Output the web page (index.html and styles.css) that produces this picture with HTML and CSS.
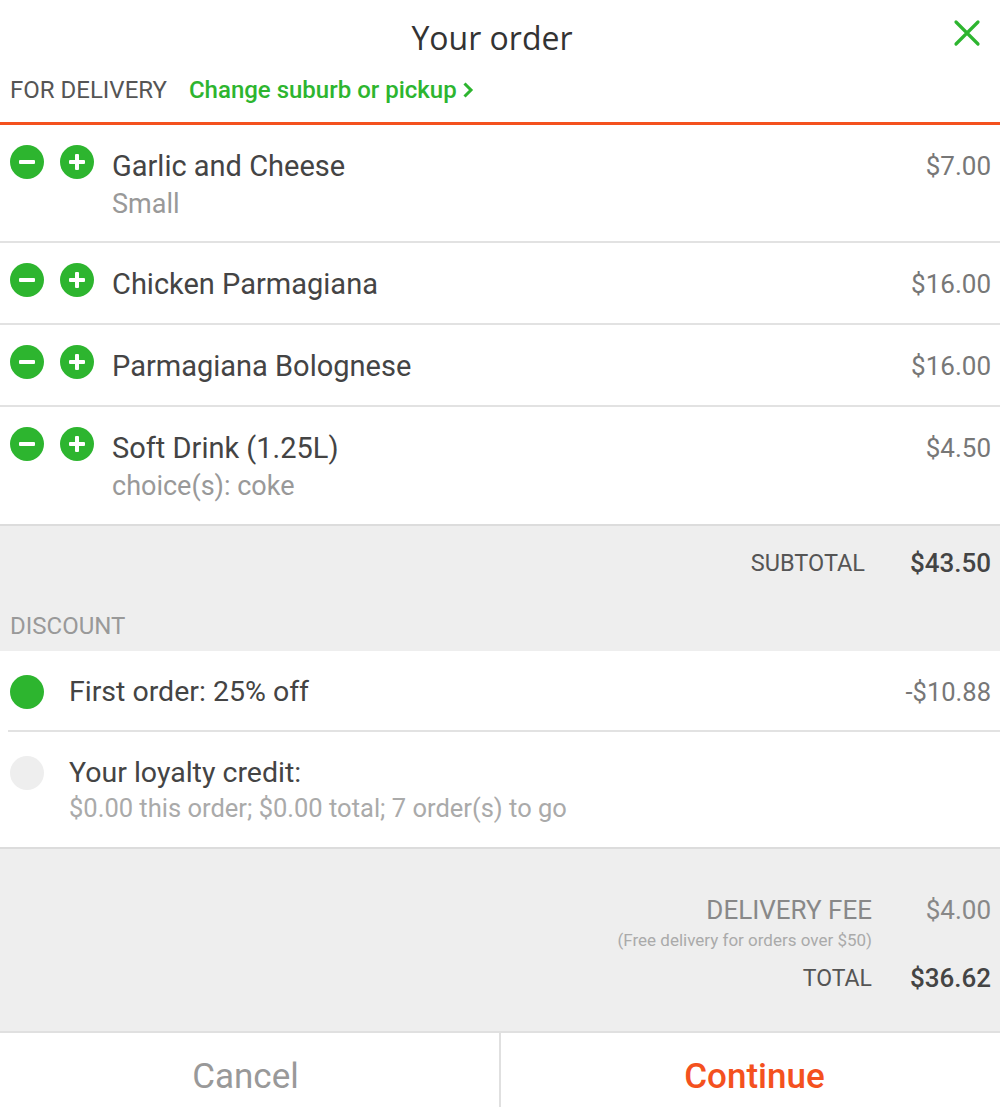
FILE: index.html
```html
<!DOCTYPE html>
<html>
<head>
<meta charset="utf-8">
<link rel="stylesheet" href="styles.css">
</head>
<body>
<div class="page">
  <header class="header">
    <div class="title-row">
      <span></span>
      <h1 class="title">Your order</h1>
      <button class="close" aria-label="Close">
        <svg width="28" height="28" viewBox="0 0 28 28"><path d="M3 3 L25 25 M25 3 L3 25" stroke="#2db52f" stroke-width="3.2" stroke-linecap="round" fill="none"/></svg>
      </button>
    </div>
    <div class="delivery-row">
      <span class="for-delivery">FOR DELIVERY</span>
      <a class="change-link">Change suburb or pickup
        <svg class="chev" width="12" height="18" viewBox="0 0 12 18"><path d="M2.5 2.5 L9 9 L2.5 15.5" stroke="#2db52f" stroke-width="3" fill="none"/></svg>
      </a>
    </div>
  </header>

  <section class="items">
    <div class="item">
      <div class="qty">
        <span class="btn-circle"><svg width="34" height="34" viewBox="0 0 34 34"><circle cx="17" cy="17" r="17" fill="#2db52f"/><rect x="9" y="15" width="16" height="4" rx="1" fill="#fff"/></svg></span>
        <span class="btn-circle"><svg width="34" height="34" viewBox="0 0 34 34"><circle cx="17" cy="17" r="17" fill="#2db52f"/><rect x="9" y="15" width="16" height="4" rx="1" fill="#fff"/><rect x="15" y="9" width="4" height="16" rx="1" fill="#fff"/></svg></span>
      </div>
      <div class="item-text">
        <div class="item-name">Garlic and Cheese</div>
        <div class="item-sub">Small</div>
      </div>
      <div class="item-price">$7.00</div>
    </div>
    <div class="item">
      <div class="qty">
        <span class="btn-circle"><svg width="34" height="34" viewBox="0 0 34 34"><circle cx="17" cy="17" r="17" fill="#2db52f"/><rect x="9" y="15" width="16" height="4" rx="1" fill="#fff"/></svg></span>
        <span class="btn-circle"><svg width="34" height="34" viewBox="0 0 34 34"><circle cx="17" cy="17" r="17" fill="#2db52f"/><rect x="9" y="15" width="16" height="4" rx="1" fill="#fff"/><rect x="15" y="9" width="4" height="16" rx="1" fill="#fff"/></svg></span>
      </div>
      <div class="item-text">
        <div class="item-name">Chicken Parmagiana</div>
      </div>
      <div class="item-price">$16.00</div>
    </div>
    <div class="item">
      <div class="qty">
        <span class="btn-circle"><svg width="34" height="34" viewBox="0 0 34 34"><circle cx="17" cy="17" r="17" fill="#2db52f"/><rect x="9" y="15" width="16" height="4" rx="1" fill="#fff"/></svg></span>
        <span class="btn-circle"><svg width="34" height="34" viewBox="0 0 34 34"><circle cx="17" cy="17" r="17" fill="#2db52f"/><rect x="9" y="15" width="16" height="4" rx="1" fill="#fff"/><rect x="15" y="9" width="4" height="16" rx="1" fill="#fff"/></svg></span>
      </div>
      <div class="item-text">
        <div class="item-name">Parmagiana Bolognese</div>
      </div>
      <div class="item-price">$16.00</div>
    </div>
    <div class="item">
      <div class="qty">
        <span class="btn-circle"><svg width="34" height="34" viewBox="0 0 34 34"><circle cx="17" cy="17" r="17" fill="#2db52f"/><rect x="9" y="15" width="16" height="4" rx="1" fill="#fff"/></svg></span>
        <span class="btn-circle"><svg width="34" height="34" viewBox="0 0 34 34"><circle cx="17" cy="17" r="17" fill="#2db52f"/><rect x="9" y="15" width="16" height="4" rx="1" fill="#fff"/><rect x="15" y="9" width="4" height="16" rx="1" fill="#fff"/></svg></span>
      </div>
      <div class="item-text">
        <div class="item-name">Soft Drink (1.25L)</div>
        <div class="item-sub">choice(s): coke</div>
      </div>
      <div class="item-price">$4.50</div>
    </div>
  </section>

  <section class="subtotal-band">
    <div class="sum-row subtotal">
      <span class="sum-label">SUBTOTAL</span>
      <span class="sum-value strong">$43.50</span>
    </div>
    <div class="discount-head">DISCOUNT</div>
  </section>

  <section class="discounts">
    <div class="disc">
      <span class="dot on"></span>
      <div class="disc-text">
        <div class="disc-name">First order: 25% off</div>
      </div>
      <div class="disc-value">-$10.88</div>
    </div>
    <div class="disc">
      <span class="dot off"></span>
      <div class="disc-text">
        <div class="disc-name">Your loyalty credit:</div>
        <div class="disc-sub">$0.00 this order; $0.00 total; 7 order(s) to go</div>
      </div>
    </div>
  </section>

  <section class="totals-band">
    <div class="sum-row">
      <span class="sum-label fee">DELIVERY FEE</span>
      <span class="sum-value muted">$4.00</span>
    </div>
    <div class="note-row">
      <span class="note">(Free delivery for orders over $50)</span>
      <span class="note-spacer"></span>
    </div>
    <div class="sum-row">
      <span class="sum-label">TOTAL</span>
      <span class="sum-value strong">$36.62</span>
    </div>
  </section>

  <footer class="actions">
    <button class="action cancel">Cancel</button>
    <button class="action continue">Continue</button>
  </footer>
</div>
</body>
</html>
```
FILE: styles.css
```css
* { box-sizing: border-box; }
html, body { margin: 0; padding: 0; background: #fff; }
body {
  font-family: Roboto, "Liberation Sans", sans-serif;
  color: #444;
  overflow: hidden;
}
.page { width: 1000px; }

.header {
  border-bottom: 3px solid #f4511e;
  padding-bottom: 17px;
}
.title-row {
  display: grid;
  grid-template-columns: 1fr auto 1fr;
  align-items: center;
  padding-top: 16px;
  height: 75px;
  align-content: start;
}
.title {
  margin: 0 16px 0 0;
  font-family: "Open Sans", "Noto Sans", sans-serif;
  font-weight: 400;
  font-size: 32px;
  line-height: 44px;
  color: #333;
}
.close {
  justify-self: end;
  margin-right: 19px;
  border: 0;
  background: none;
  padding: 0;
  width: 28px;
  height: 28px;
  margin-top: -10px;
}
.close svg { display: block; }
.delivery-row {
  display: flex;
  align-items: center;
  padding-left: 10px;
  height: 30px;
}
.for-delivery {
  font-size: 24px;
  color: #555;
  margin-right: 22px;
}
.change-link {
  font-size: 24px;
  color: #2db52f;
  font-weight: 500;
  display: flex;
  align-items: center;
}
.chev { margin-left: 5px; }

.item {
  display: flex;
  align-items: flex-start;
  padding: 22px 9px 18px 10px;
  border-bottom: 2px solid #e2e2e2;
}
.item:nth-child(2), .item:nth-child(3) { padding-bottom: 20px; }
.item:last-child { padding-bottom: 19px; border-bottom-color: #dcdcdc; }
.qty {
  display: flex;
  gap: 16px;
  margin-top: -2px;
  margin-right: 18px;
}
.btn-circle { width: 34px; height: 34px; display: block; }
.btn-circle svg { display: block; }
.item-text { flex: 1; }
.item-name { font-size: 29px; line-height: 38px; color: #444; }
.item-sub { font-size: 27px; line-height: 38px; color: #999; }
.item-price { font-size: 26px; line-height: 38px; color: #777; }

.subtotal-band {
  background: #eeeeee;
  padding: 22px 0 10px;
}
.sum-row {
  display: flex;
  justify-content: flex-end;
  align-items: center;
  height: 30px;
  padding-right: 9px;
}
.sum-label {
  font-size: 23px;
  color: #555;
  text-align: right;
}
.sum-label.fee { font-size: 26px; color: #888; }
.sum-value {
  width: 119px;
  text-align: right;
  font-size: 26px;
  color: #666;
}
.sum-value.strong { color: #444; font-weight: 500; }
.sum-value.muted { color: #888; }
.subtotal .sum-label { font-size: 23.5px; }
.subtotal .sum-value { width: 126px; }
.discount-head {
  font-size: 24px;
  color: #999;
  padding-left: 10px;
  line-height: 30px;
  margin-top: 33px;
}

.disc {
  display: flex;
  align-items: flex-start;
  margin-left: 8px;
  padding: 21px 9px 20px 2px;
  border-bottom: 2px solid #e2e2e2;
}
.disc:first-child { padding-bottom: 18px; }
.disc:last-child { margin-left: 0; padding-left: 10px; padding-bottom: 24px; border-bottom-color: #dcdcdc; }
.dot {
  width: 34px;
  height: 34px;
  border-radius: 50%;
  margin-top: 3px;
  margin-right: 25px;
  flex: none;
}
.dot.on { background: #2db52f; }
.dot.off { background: #eeeeee; }
.disc-text { flex: 1; }
.disc-name { font-size: 28.5px; line-height: 40px; color: #444; }
.disc-sub { font-size: 25.5px; line-height: 30px; color: #aaa; }
.disc-value { font-size: 25.5px; line-height: 40px; color: #777; }

.totals-band {
  background: #eeeeee;
  padding: 46px 0 38px;
  border-bottom: 2px solid #e0e0e0;
}
.note-row {
  display: flex;
  justify-content: flex-end;
  padding-right: 9px;
  height: 30px;
  align-items: center;
}
.note { font-size: 17px; color: #aaa; }
.note-spacer { width: 119px; }
.totals-band .sum-row + .note-row + .sum-row { margin-top: 8px; }

.actions {
  display: flex;
  height: 90px;
}
.action {
  flex: 1;
  border: 0;
  background: #fff;
  font-family: Roboto, "Liberation Sans", sans-serif;
  font-size: 35px;
  padding: 0 0 4px;
  margin: 0;
}
.cancel { color: #999; border-right: 2px solid #e0e0e0; padding-right: 8px; }
.continue { color: #f4511e; font-weight: 500; padding-left: 8px; }
```
